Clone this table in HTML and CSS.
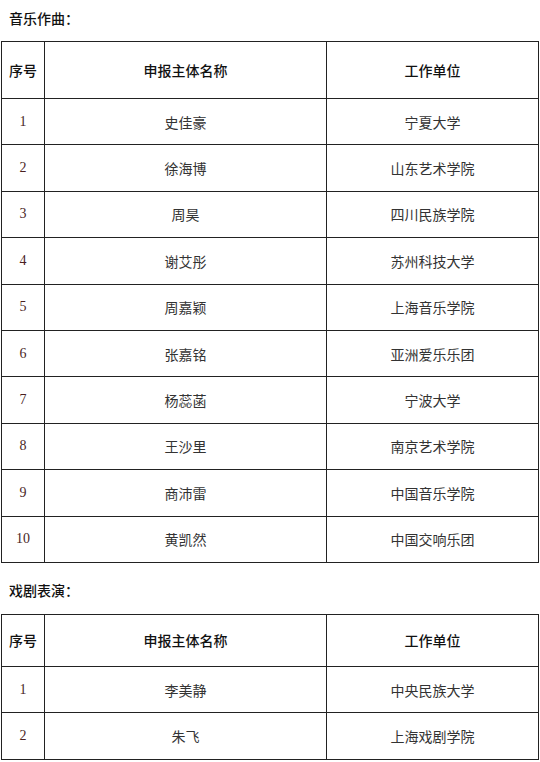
FILE: index.html
```html
<!DOCTYPE html>
<html lang="zh">
<head>
<meta charset="utf-8">
<link rel="stylesheet" href="styles.css">
</head>
<body>
<p class="title t1">音乐作曲：</p>
<table class="list l1">
  <colgroup><col class="c1"><col class="c2"><col class="c3"></colgroup>
  <tr class="head"><th>序号</th><th>申报主体名称</th><th>工作单位</th></tr>
  <tr><td class="num">1</td><td>史佳豪</td><td>宁夏大学</td></tr>
  <tr><td class="num">2</td><td>徐海博</td><td>山东艺术学院</td></tr>
  <tr><td class="num">3</td><td>周昊</td><td>四川民族学院</td></tr>
  <tr><td class="num">4</td><td>谢艾彤</td><td>苏州科技大学</td></tr>
  <tr><td class="num">5</td><td>周嘉颖</td><td>上海音乐学院</td></tr>
  <tr><td class="num">6</td><td>张嘉铭</td><td>亚洲爱乐乐团</td></tr>
  <tr><td class="num">7</td><td>杨蕊菡</td><td>宁波大学</td></tr>
  <tr><td class="num">8</td><td>王沙里</td><td>南京艺术学院</td></tr>
  <tr><td class="num">9</td><td>商沛雷</td><td>中国音乐学院</td></tr>
  <tr><td class="num">10</td><td>黄凯然</td><td>中国交响乐团</td></tr>
</table>
<p class="title t2">戏剧表演：</p>
<table class="list l2">
  <colgroup><col class="c1"><col class="c2"><col class="c3"></colgroup>
  <tr class="head"><th>序号</th><th>申报主体名称</th><th>工作单位</th></tr>
  <tr><td class="num">1</td><td>李美静</td><td>中央民族大学</td></tr>
  <tr><td class="num">2</td><td>朱飞</td><td>上海戏剧学院</td></tr>
</table>
</body>
</html>
```
FILE: styles.css
```css
html, body {
  margin: 0;
  padding: 0;
  background: #fff;
}
body {
  font-family: "Noto Sans CJK SC", "Liberation Sans", sans-serif;
  font-size: 14px;
  color: #333;
}
.title {
  margin: 0;
  padding-left: 9px;
  font-size: 14px;
  line-height: 20px;
  color: #111;
  font-weight: 500;
}
.t1 { padding-top: 8px; height: 33px; }
.t2 { padding-top: 17px; height: 34px; }
.list {
  margin-left: 1px;
  width: 537px;
  border-collapse: collapse;
  table-layout: fixed;
}
.c1 { width: 43px; }
.c2 { width: 282px; }
.c3 { width: 212px; }
.list th, .list td {
  border: 1px solid #222;
  padding: 0;
  text-align: center;
  vertical-align: middle;
  font-size: 14px;
}
.list th {
  color: #111;
  font-weight: 500;
}
.l1 .head th { height: 56px; }
.l2 .head th { height: 51px; }
.list td { height: 45.4px; }
.num {
  font-family: "Liberation Serif", serif;
  font-size: 15px;
  color: #4a1f1f;
}
```
